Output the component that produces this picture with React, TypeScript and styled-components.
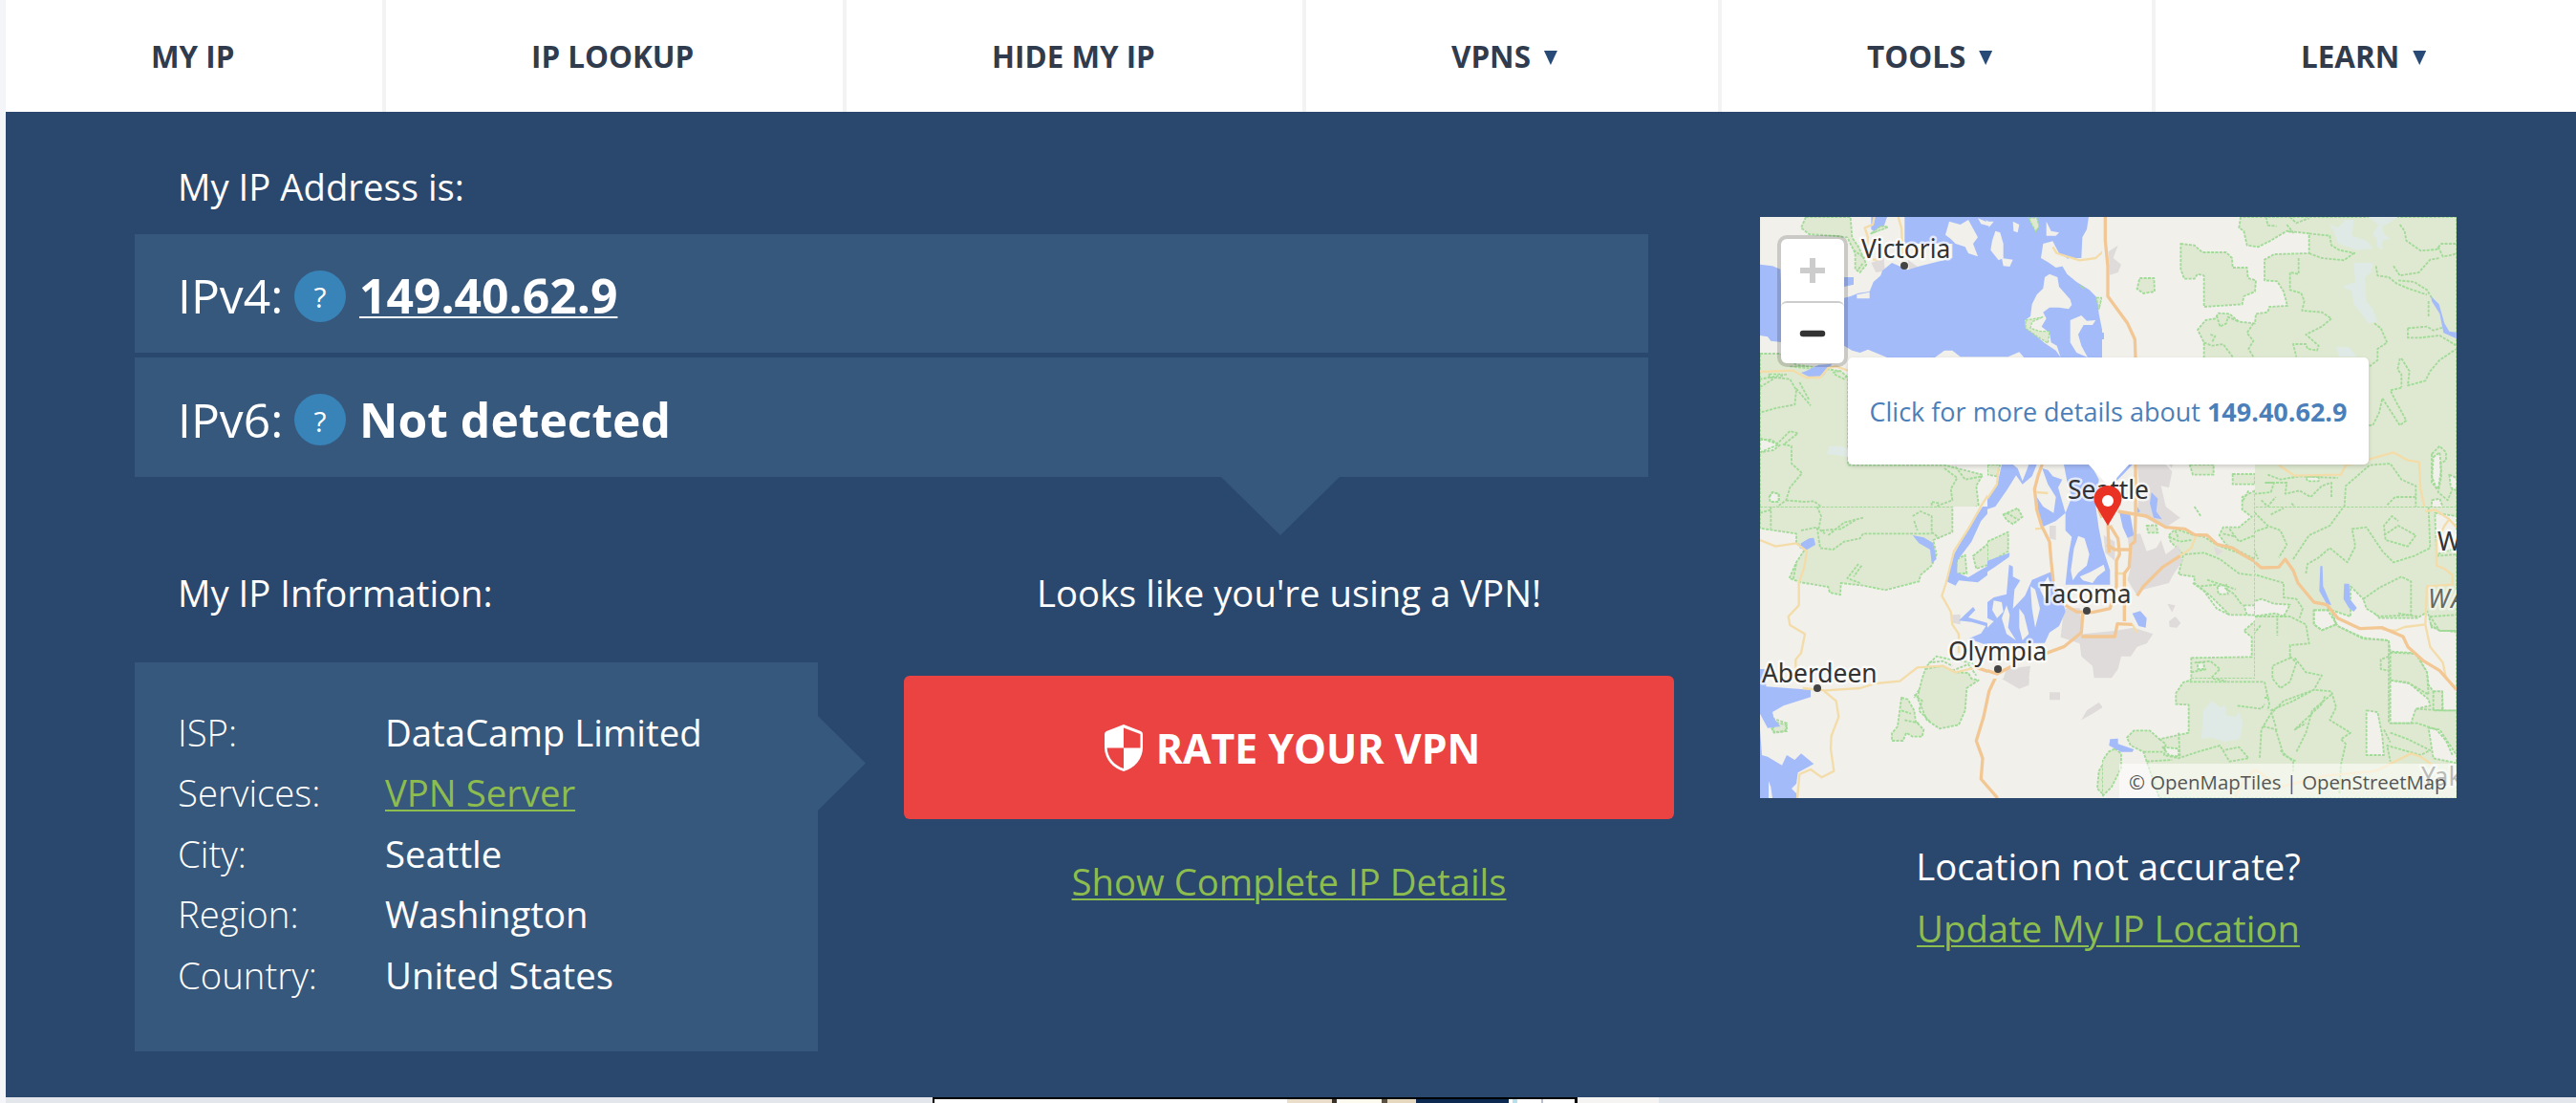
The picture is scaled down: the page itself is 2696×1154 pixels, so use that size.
import React from 'react';
import styled, { createGlobalStyle, css } from 'styled-components';

const NAVY = '#2a476e';
const PANEL = '#37587d';
const GREEN = '#8dbd4e';
const LAND = '#f1f0eb';
const WOOD = '#dfe9d1';
const WATER = '#a4bbfa';
const TOWN = '#dedbda';
const ICE = '#dfeae6';

const Global = createGlobalStyle`
  * { box-sizing: border-box; }
  body { margin: 0; background: #f3f5f8; overflow: hidden; font-family: "Open Sans", "Noto Sans", sans-serif; }
`;

const Page = styled.div`
  display: flex;
  flex-direction: column;
  width: 2696px;
  height: 1154px;
  padding-left: 6px;
  overflow: hidden;
`;

const Nav = styled.nav`
  display: grid;
  grid-template-columns: 398px 482px 481px 435px 454px 1fr;
  height: 117px;
  flex: none;
  background: #fff;
`;

const NavItem = styled.a`
  display: flex;
  align-items: center;
  gap: 14px;
  padding: 0 0 1px 152px;
  border-right: 4px solid #f3f3f4;
  color: #303c4d;
  font-size: 31.4px;
  font-weight: 700;
  white-space: nowrap;
  &:last-child { border-right: 0; }
`;

const Caret = styled.span`
  width: 14px;
  height: 15px;
  margin-top: 5px;
  background: #284a77;
  clip-path: polygon(0 0, 100% 0, 50% 100%);
`;

const Hero = styled.main`
  display: flex;
  height: 1031px;
  flex: none;
  padding: 51px 0 0 135px;
  background: ${NAVY};
  color: #fff;
  font-size: 38.3px;
  line-height: 52px;
`;

const Left = styled.section`
  width: 1701px;
  flex: none;
`;

const Title = styled.h2<{ $indent?: boolean }>`
  margin: 0;
  padding-top: 1px;
  height: 52px;
  padding-left: ${(p) => (p.$indent ? 45 : 0)}px;
  font-size: inherit;
  font-weight: 400;
  white-space: nowrap;
`;

const Addresses = styled.div`
  position: relative;
  display: flex;
  flex-direction: column;
  gap: 5px;
  width: 1584px;
  margin-top: 25px;
  &::after {
    content: '';
    position: absolute;
    left: 1137px;
    top: 100%;
    width: 124px;
    height: 61px;
    background: ${PANEL};
    clip-path: polygon(0 0, 100% 0, 50% 100%);
  }
`;

const AddressRow = styled.div<{ $h: number }>`
  display: flex;
  align-items: center;
  height: ${(p) => p.$h}px;
  padding: 5px 0 0 45px;
  background: ${PANEL};
  font-size: 49.8px;
`;

const Kind = styled.span`
  width: 122px;
  margin-top: -1px;
`;

const Help = styled.span`
  display: flex;
  align-items: center;
  justify-content: center;
  width: 54px;
  height: 54px;
  margin-right: 14px;
  border-radius: 50%;
  background: #3884b8;
  font-size: 30px;
  padding-top: 3px;
`;

const Address = styled.strong<{ $link?: boolean }>`
  margin-top: -1px;
  font-weight: 700;
  text-decoration: ${(p) => (p.$link ? 'underline' : 'none')};
  text-decoration-thickness: 2px;
  text-underline-offset: 3px;
`;

const Columns = styled.div`
  display: flex;
  gap: 90px;
  padding-top: 94px;
`;

const InfoColumn = styled.div`
  width: 715px;
`;

const InfoPanel = styled.dl`
  position: relative;
  display: grid;
  grid-template-columns: 217px 1fr;
  grid-auto-rows: 63.4px;
  height: 407px;
  margin: 48px 0 0;
  padding: 42px 0 0 45px;
  background: ${PANEL};
  line-height: 63.4px;
  white-space: nowrap;
  &::after {
    content: '';
    position: absolute;
    left: 100%;
    top: 56px;
    width: 50px;
    height: 99px;
    background: ${PANEL};
    clip-path: polygon(0 0, 100% 50%, 0 100%);
  }
`;

const Term = styled.dt`
  font-weight: 300;
`;

const Value = styled.dd`
  margin: 0;
`;

const Link = styled.a`
  color: ${GREEN};
  text-decoration: underline;
  text-decoration-thickness: 2px;
  text-underline-offset: 3px;
`;

const ActionColumn = styled.div`
  display: flex;
  flex-direction: column;
  align-items: center;
  width: 806px;
`;

const RateButton = styled.button`
  display: flex;
  align-items: center;
  justify-content: center;
  gap: 14px;
  width: 100%;
  height: 150px;
  margin: 62px 0 39px;
  padding: 0 0 0 7px;
  border: 0;
  border-radius: 6px;
  background: #eb4242;
  color: #fff;
  font: 700 42.8px "Open Sans", sans-serif;
`;

const Right = styled.section`
  display: flex;
  flex-direction: column;
  align-items: center;
  width: 729px;
  padding-top: 59px;
  line-height: 65px;
`;

const MapBox = styled.div`
  position: relative;
  width: 729px;
  height: 608px;
  margin-bottom: 39px;
  overflow: hidden;
  background: ${LAND};
`;

const ZoomBar = styled.div`
  position: absolute;
  left: 18px;
  top: 19px;
  width: 74px;
  height: 138px;
  border: 4px solid rgba(0, 0, 0, 0.16);
  border-radius: 10px;
  background: #fff;
  background-clip: padding-box;
`;

const ZoomButton = styled.div<{ $color: string }>`
  display: flex;
  align-items: center;
  justify-content: center;
  height: 65px;
  color: ${(p) => p.$color};
  & + & { border-top: 2px solid #ccc; border-radius: 6px 6px 0 0; }
`;

const Popup = styled.div`
  position: absolute;
  left: 92px;
  top: 147px;
  display: flex;
  align-items: center;
  justify-content: center;
  width: 545px;
  height: 112px;
  padding-top: 2px;
  border-radius: 5px;
  background: #fff;
  box-shadow: 0 2px 4px rgba(0, 0, 0, 0.16);
  color: #4b7fb9;
  font-size: 27px;
  line-height: 40px;
  white-space: pre;
  &::after {
    content: '';
    position: absolute;
    left: 251px;
    top: 111px;
    width: 44px;
    height: 24px;
    background: #fff;
    clip-path: polygon(0 0, 100% 0, 50% 100%);
  }
`;

const Credits = styled.div`
  position: absolute;
  right: 0;
  bottom: 0;
  display: flex;
  align-items: center;
  width: 353px;
  height: 36px;
  padding: 3px 0 0 10px;
  background: rgba(255, 255, 255, 0.55);
  color: #555;
  font-size: 20.4px;
  line-height: 33px;
  white-space: pre;
`;

const Pin = styled.svg`
  position: absolute;
  left: 349px;
  top: 280px;
`;

const Footer = styled.div`
  display: flex;
  height: 6px;
  flex: none;
  background: #e3e7ec;
`;

const Strip = styled.span<{ $w: number; $c?: string }>`
  flex: none;
  width: ${(p) => p.$w}px;
  background: ${(p) => p.$c || 'transparent'};
`;

const Banner = styled.div`
  display: flex;
  width: 675px;
  flex: none;
  border: solid #000;
  border-width: 2px 3px 0 2px;
  background: #fff;
`;

type Tile = {
  x: number; y: number; w: number; h: number;
  wood?: string; clearing?: string; grove?: string; ice?: string; town?: string;
  water?: string; island?: string; trail?: string; minor?: string; major?: string;
};

const tiles: Tile[] = [
  {
    x: -12, y: -12, w: 380, h: 320,
    wood: 'M180,36 L320,36 L325,100 L345,130 L370,185 L350,210 L335,200 L335,150 L310,100 L265,95 L190,90 L165,70Z M36,465 L100,465 L150,500 L235,512 L290,520 L312,540 V815 H615 L735,845 L715,880 L722,940 L700,960 H36Z',
    clearing: 'M36,735 L70,735 L98,752 L78,768 L36,775Z M65,530 H105 V540 H65Z M65,915 L75,900 L95,905 V930 H68Z',
    ice: 'M255,755 L290,755 L312,765 V788 L245,780Z',
    town: 'M385,180 L425,165 L428,205 L400,210Z M500,170 L535,195 V203 L505,203Z',
    water: 'M36,185 L75,190 L100,200 L110,430 L70,425 L60,412 L36,408Z M180,520 L220,500 L262,497 L235,535 L190,538 L165,525Z M385,36 H435 L425,65 L400,85 L385,75Z M300,225 H330 V248 L300,255Z M490,36 H1068 L1062,75 L1048,100 L1045,165 L1005,165 L985,190 L1000,215 L1030,240 L1070,265 L1095,290 L1100,340 L1112,400 V477 H865 L850,460 L815,475 H665 L640,455 L615,455 L585,477 H435 L375,452 L350,462 L325,455 L300,440 V290 L320,285 L345,275 L380,270 L392,240 L415,220 L420,205 L450,180 L500,202 L540,190 L640,165 L640,120 H490Z',
    island: 'M630,50 L665,60 L690,45 L720,100 L705,120 L720,160 L690,150 L680,130 L650,120 L635,105 L618,92Z M765,110 L775,80 L790,85 L800,120 V165 L785,172 L760,140Z M830,50 L850,60 L845,85 L832,80Z M720,40 L745,50 L770,50 L758,65 L730,58Z M795,165 L830,170 L820,192 L800,190Z M935,50 L950,80 L975,85 L965,95 L935,95Z M925,120 L955,112 L975,150 L1000,165 L1010,178 L990,190 L965,195 L940,178 L918,165Z M930,225 L945,215 L970,225 L975,255 L1010,295 L1015,312 L1005,325 L975,320 L945,320 L925,335 L935,355 L920,380 L945,400 L950,430 L968,440 L980,477 L965,455 L930,432 L895,402 L870,385 L868,360 L885,348 L890,310 L905,280 L925,260Z M1010,360 L1045,345 L1062,362 L1090,360 L1080,375 L1052,375 L1035,405 L1045,440 L1065,477 L1030,462 L1010,430Z M340,280 L380,272 V292 H340Z M745,45 L760,55 L755,70 Z',
    grove: 'M880,40 L905,38 L912,65 L902,82 L890,60Z M870,360 L925,350 L890,365 L885,385 L915,395 L945,395 L940,432 L905,410 L870,385Z M1040,250 L1055,262 Z M1092,290 L1108,290 L1100,325Z M415,65 L438,68 L405,80 L385,88Z',
    trail: 'M36,570 L85,540 L130,545 L150,580 L145,625 L90,635 L36,650 M150,575 L195,628 M160,555 L190,610 M120,530 L36,545 M36,730 L90,748 L130,708 L155,715 L110,750 L135,755 L135,810 L168,840 L130,885 L118,925 L70,960 M36,775 L95,750 M118,925 L175,930 L205,928 L235,950 M65,915 L75,900 L95,905 V930 M615,825 L655,855 L635,890 L640,925 L600,940 L560,960 M650,820 L680,860 L735,850 M575,955 V930 L600,935 M130,505 L225,515 L225,508 M270,530 L300,545 L312,530 M265,525 L290,518 M330,140 L365,165 M345,200 L360,180',
    minor: 'M36,522 L140,518 L180,540 L225,540 L250,510 L275,505 L312,518 M395,36 L390,60 L365,70 L375,100 L372,130 M470,36 L480,70 L485,170 M390,170 L410,170 M955,130 L968,150 L1000,160 L1040,172 L1090,165 L1118,140 M790,815 L785,860 L725,950',
    major: 'M1120,36 L1118,130 L1125,170 L1130,290 L1142,310',
  },
  {
    x: 358, y: -12, w: 380, h: 320,
    wood: 'M435,36 L430,70 L445,80 L455,125 L490,130 L530,110 L580,80 L650,88 V150 L540,153 L510,170 V235 L550,238 L570,270 L582,315 L525,318 L520,335 L483,340 L480,370 L430,365 L400,340 L365,338 L355,355 L325,360 L300,390 L320,430 V480 H475 V905 L437,912 V960 H1113 V36Z M247,120 L290,125 L315,147 L390,147 L408,165 L410,195 L455,195 L458,228 L483,235 L480,270 L445,285 L440,310 L320,318 V220 L300,215 L290,230 L258,230 L247,200Z M118,228 H163 L165,270 L130,276 L110,262Z M280,815 L295,847 L350,845 V815Z M408,845 H473 V877 L410,873Z',
    clearing: 'M1040,790 L1060,775 L1065,830 L1055,890 L1035,870Z M1090,845 L1113,855 V895 L1095,885Z M1035,925 L1060,920 L1075,960 H1035Z M640,852 L680,850 V865 H645Z',
    ice: 'M715,60 L740,70 L765,45 L790,45 L785,95 L830,110 L850,135 L800,140 L740,118 L730,85Z M790,180 H850 L845,210 L825,225 L830,300 L850,325 L865,365 L835,370 L815,340 L790,310 L785,270 L755,255 L795,240Z M735,445 H775 L800,475 H745Z M835,36 H930 L900,55 L880,65 L885,90 L905,105 L880,110 L880,138 L865,130 L862,105 L850,90 L868,60Z',
    town: 'M20,145 L50,125 L35,165 L60,185 L50,210 L25,218Z',
    water: 'M1033,285 L1058,310 L1075,370 L1090,395 L1113,398 V418 L1072,400 L1060,340 L1035,300Z M0,398 L6,400 V420 H0Z',
    trail: 'M515,36 L520,62 L548,65 M590,36 L610,55 L650,40 M580,60 L600,85 L580,80 M650,150 L690,165 L760,172 L790,150 M650,88 L715,95 L720,125 L745,140 L795,150 M617,165 V215 L590,210 V265 L625,275 L635,300 L628,330 L690,335 L720,355 L690,380 L640,405 L680,440 L675,455 L645,450 L640,435 L600,435 L610,475 M320,430 L345,440 L380,435 L410,475 M340,405 L355,410 L345,430 M360,345 L370,380 L390,370 L395,350 L430,365 M475,370 L455,400 L475,425 L460,450 L475,475 M855,370 L875,385 L895,430 L865,450 L865,485 L840,505 M935,60 L950,80 L955,110 L1000,142 L1050,138 L1065,120 L1113,120 M1055,130 L1070,160 L1100,155 L1113,150 M915,190 L935,220 L995,210 L1030,170 L1060,165 M930,235 L980,240 L1020,265 L1035,290 M860,190 L865,220 L900,225 L925,245 L960,260 L1020,280 M1025,300 L1025,350 M960,385 V415 H1000 L1060,408 L1113,440 M960,385 L1020,380 L1040,392 L1080,380 M935,480 L928,515 L940,530 V570 M940,480 L965,520 L960,565 L1015,550 L1030,520 L1060,485 L1113,450 M940,572 L905,580 L920,610 L955,675 L935,690 L880,605 L870,650 L850,690 L837,690 M1035,780 L1060,755 L1080,775 L1080,800 L1062,810 L1065,850 L1055,900 L1085,925 L1100,890 M1035,780 L1035,850 L1050,890 M760,960 L765,880 L800,850 L840,815 L905,810 L940,860 L985,880 L985,950 M985,915 L920,915 L895,940 M520,870 L580,870 L575,905 L620,895 L655,915 L690,880 L720,870 V915 M440,915 L480,905 L530,900 L540,870 L510,870 M500,925 L520,945 L545,915 M595,935 L605,945 M520,845 L560,860 L620,850 L740,855',
    minor: 'M837,797 L880,785 L915,775 L960,800 L995,805 L1000,890 L1015,960 M555,815 L605,848 L750,845 L765,815 L837,800',
    major: 'M10,36 V110 L18,190 V285 L80,370 L103,420 L105,477',
  },
  {
    x: -12, y: 303, w: 380, h: 320,
    wood: 'M36,0 H640 V80 L580,105 L590,150 L575,185 L540,215 L535,235 L430,262 L360,248 L290,240 L288,277 L255,270 L250,252 L165,238 L128,225 L150,175 L180,130 L150,115 V85 L36,68Z M655,165 L680,152 L685,210 H650Z M705,155 L760,110 L818,80 V130 L760,180 L715,195Z M555,510 L610,500 L650,520 L690,522 L700,540 L722,545 L685,570 L680,640 L660,685 L600,697 L560,670 L530,600 L545,540Z M480,600 L500,605 L520,640 L525,675 L550,700 L545,722 L515,722 L495,710 L485,735 H450 V712 L468,690Z M1140,740 L1130,780 L1100,830 L1095,885 L1115,905 L1140,860Z M75,675 L120,685 V705 L80,708Z',
    clearing: '',
    town: 'M785,535 L885,500 L880,560 L850,572Z M945,583 H978 V607 H945Z M1045,670 L1062,640 L1100,615 L1112,630 L1080,650Z M1042,405 H1140 V530 L1085,535 L1080,510 L1042,470Z M640,340 L665,338 V370 L640,365Z',
    water: 'M515,90 L550,97 L580,115 L590,165 L575,178 L570,135 L535,115Z M165,115 L190,100 L205,98 L210,120 L180,137 L160,130Z M735,0 L690,70 L645,150 L622,235 L650,248 L660,232 L720,238 L760,208 L800,185 L820,150 L780,172 L735,195 L690,222 L655,208 V170 L700,110 L730,45 L770,0Z M660,358 L705,315 L712,325 L690,348 L765,370 V440 L690,415 L730,398 L745,375 L700,362Z M36,510 H55 V565 L195,575 V598 L110,625 L75,645 L80,665 L100,690 L60,695 L36,650Z M36,700 L42,780 L60,785 L105,812 L120,780 L145,795 L165,775 L205,808 L155,835 L150,870 L135,885 L150,900 V915 H36Z',
    island: 'M63,862 L70,880 L75,915 H63Z',
    trail: 'M70,0 V68 M36,20 L70,10 M215,0 L228,30 L220,70 L240,85 M165,75 L215,65 L225,130 L265,135 L300,110 L350,100 L360,85 H575 M250,90 L300,50 L360,35 M230,75 L290,70 L340,40 M515,30 L540,15 L575,30 V80 L600,100 M520,45 L530,75 M345,180 L310,225 L350,240 M355,185 L330,220 M150,180 L140,230 M560,500 L590,470 L625,478 L700,490 L720,505 M565,490 L610,485 L640,500 M640,515 L690,495 L715,530 M520,590 L545,610 L535,640 L570,675 M480,640 L510,650 M490,670 L535,680 M75,665 L120,680 L115,705 L80,710 L70,690 M1120,830 L1110,860 M535,575 L520,600',
    minor: 'M36,105 L85,125 L150,115 L183,140 L175,190 L158,240 V310 L125,345 L130,372 L177,400 L165,460 L148,480 V520 M730,0 L690,70 L645,140 L620,240 L607,280 L635,330 L640,370 L660,400 V460 M170,570 L240,577 L350,570 L400,555 L475,548 L530,505 L610,500 L650,520 L715,505 M235,577 L275,610 L283,660 L260,720 L258,760 L268,830 L230,850 L195,825 L160,840 L153,915',
    major: 'M715,505 L780,527 L755,580 L738,660 L715,735 L735,790 L730,855 L782,915 M780,527 L840,500',
  },
  {
    x: 358, y: 303, w: 380, h: 320,
    wood: 'M430,0 H1113 V915 H180 L140,800 L130,770 L90,750 L78,725 L100,703 H150 L180,730 L272,710 V622 L232,620 V585 L255,552 L278,545 V490 L290,472 H470 V380 L450,370 L470,250 L430,150Z M40,760 L60,775 V820 L30,880 L0,910 V800 L20,770Z',
    clearing: 'M450,318 L470,300 L500,290 L540,305 L590,308 L570,345 L545,335 L470,345Z M665,325 H720 L735,370 L690,388 L665,370Z M780,250 L820,290 L870,350 L990,350 L1022,330 L1035,380 L1113,395 V640 L1070,640 L1068,580 L1040,580 L1025,560 L1020,520 L985,460 L905,455 L900,420 L820,415 L740,375 L705,320 L780,345Z M905,545 L965,555 L1025,605 L1030,625 L985,635 L970,680 H905Z M830,640 L865,645 L880,720 L885,780 H830Z M1025,695 L1060,700 L1113,780 V805 L1040,790Z M1045,20 L1113,30 V130 L1050,150Z M190,755 L240,760 V785 L210,780Z',
    grove: 'M820,290 L870,255 L940,220 L970,235 V340 L870,345 L830,320Z M1030,345 L1113,340 V390 H1060Z M905,458 L985,462 L1020,520 L1025,590 L960,552 L905,545Z M1040,580 H1068 V640 H1040Z',
    ice: 'M345,610 L370,630 L388,625 L390,655 L420,660 L430,645 L442,680 L432,730 L385,738 L345,725 L312,728 L318,640Z',
    water: 'M25,730 L50,728 L50,745 L100,762 L95,770 L60,770 L22,750Z M685,187 H692 L694,250 L720,310 L705,305 L682,265Z M760,242 H776 L778,290 L800,318 L790,330 L775,318 L758,290Z',
    trail: 'M440,15 L480,20 L520,60 L560,75 L580,120 L555,160 M520,65 L475,80 V130 L490,165 M530,25 L570,5 M640,210 L645,180 L680,160 L715,130 L770,175 L795,125 L785,70 L830,65 L880,140 L915,175 L980,155 L1030,130 L1025,0 M600,165 L650,90 L715,60 L755,5 M885,90 L930,60 L985,90 L960,125 L890,105 L885,60 L910,30 L930,45 M450,200 L485,215 L570,240 V285 L610,290 L630,320 L620,350 M480,345 H590 L640,370 L650,430 L590,435 V475 L535,500 V540 L560,570 L590,550 L610,490 L590,470 M605,475 L640,520 L690,530 L665,575 L570,610 L530,650 L500,700 L495,790 M510,550 L525,620 L520,640 M510,600 L525,600 M425,625 L500,635 L510,620 M275,550 H505 M545,690 L530,640 L600,610 L665,575 L720,580 L735,630 L715,670 L780,710 L750,730 L765,745 L750,810 L745,900 M720,590 L660,640 L640,710 L610,770 M700,595 L690,620 L605,700 L640,680 M545,700 L570,780 L610,800 M470,370 L450,390 L480,395 L500,370 M550,350 V405 M740,375 L820,412 L900,420 V680 M900,470 L875,480 V510 L900,515 M985,635 L1070,640 H1113 M905,680 H990 L1050,700 L1080,735 L1100,780 M905,710 L960,730 L1030,765 L1000,780 L895,750 L905,800 M885,700 L905,740 M930,335 L990,345 M350,480 L375,500 L350,540 L390,548 M290,480 V540 M325,485 L340,540 M180,730 L200,745 L195,780 L240,790 L300,770 L370,750 L400,800 L460,790 L430,755 L380,765 M240,710 L245,790 M130,770 L190,770 M140,800 L220,795 M505,690 L550,700 M560,765 L600,800 V830 M1050,155 L1113,150 M1030,370 L1060,390 H1113 M665,325 H720 L735,370 L690,388 L665,370Z',
    minor: 'M880,385 L920,390 L950,378 L1015,370 L1020,250 L1100,245 V215 L1075,195 L1050,185 V110 L1075,60 L1090,40 L1045,10 L1015,15 M1090,40 L1113,65 M1015,370 L1030,440 L1070,490 L1080,540 M480,825 L560,880 L700,845 L860,830 L970,775 L1000,785 L1035,810 M480,825 L440,870 L415,915',
    major: 'M480,175 L500,192 L555,190 L575,165 L600,200 L615,240 L665,300 L705,308 L740,350 L810,383 L880,380 L945,408 L960,440 L1010,485 L1060,515 L1113,575',
  },
  {
    x: 238, y: 243, w: 280, h: 240,
    wood: 'M0,48 H40 L30,85 L0,80Z M50,205 L95,185 L110,212 L80,235 L60,222Z M0,290 L65,260 V320 L0,360Z M635,48 L645,80 H710 V48Z M770,78 H840 V110 H770Z M840,130 L800,150 V190 L830,212 L790,245 L740,245 L728,270 L750,300 L840,345Z M570,270 L590,250 L650,270 L680,275 L720,300 L800,330 L840,355 V520 L760,520 L700,460 L650,420 V400 L600,393 L615,330 L575,290Z M640,655 L830,652 V590 L805,570 L840,540 V720 H640Z M500,240 L530,238 L535,262 L505,262Z',
    clearing: 'M722,430 L750,425 L755,455 L725,455Z M805,490 H840 V520 H815Z M660,670 L680,670 V690 H660Z',
    town: 'M470,48 H560 L580,70 L570,120 L545,115 L560,180 L605,215 L560,245 L530,235 L470,200 L478,120Z M440,270 L480,265 L500,320 L530,310 L545,285 L560,330 L600,300 L612,350 L580,400 L570,420 L490,440 L470,460 L440,410 L450,370Z M240,500 L290,498 L300,580 L400,570 L460,560 L520,580 L500,610 L470,620 L450,650 L420,650 L410,690 L390,718 H335 L330,680 L295,650 L290,610 L230,590Z M195,240 H215 V285 L195,280Z M365,270 L400,290 V350 L370,325Z M565,485 L590,490 L580,512Z M570,540 L590,525 L607,545 L595,560 L572,558Z M60,690 L135,680 L130,720 H50Z M710,305 L740,320 L720,335Z M570,48 L582,48 L578,60Z M385,140 L410,130 V190 L385,200Z',
    water: 'M45,48 H155 L140,85 L110,110 L90,82 L60,130 L25,180 L0,188 V155 L30,115Z M240,48 H325 L350,95 L340,180 L350,250 L362,310 L385,380 V425 H245 L255,330 L265,275 L245,255 V200 L265,150 L250,100Z M172,60 L190,65 L205,85 L235,95 L222,120 L235,165 L245,200 L215,225 L175,243 L160,205 L155,150 L175,180 L208,200 L215,150 L190,110Z M68,362 L80,368 V400 L103,412 L85,440 L80,500 L118,460 L140,410 L200,385 L215,430 L240,490 L245,510 L225,555 L195,575 L180,608 L0,610 V560 L20,540 L0,530 V480 L20,465 L60,455Z M0,350 L70,325 L68,338 L20,372 L0,385Z M415,200 L448,203 L460,270 L440,278 L425,245Z M405,100 L430,75 L455,48 H410Z M515,135 L535,155 L530,195 L548,220 L522,215 L510,170Z M455,515 L480,508 L500,530 L497,560 L475,555Z M470,180 L480,195 L470,200Z',
    island: 'M285,272 L305,280 L320,330 L312,365 L285,388 L268,412 L262,380 L272,310Z M365,362 L370,380 L345,400 L330,420 L300,412 L290,400 L325,385Z M20,475 L45,480 L50,510 L30,530 L15,505Z M60,490 L70,520 L65,560 L90,600 L60,580 L45,530Z M100,500 L115,520 L130,580 L110,600 L100,560Z M135,430 L150,440 L165,500 L150,560 L140,500Z M190,400 L200,430 L180,470 L165,440Z M80,48 L95,60 L110,100 L120,75 L130,48Z',
    trail: 'M650,180 L670,210 M60,200 L95,220 M570,275 L605,290 L640,285 M620,330 L680,325 L730,345 L790,390 L830,395 M645,420 L680,445 L720,500 L760,520 M670,430 L720,425 M690,410 L780,440 M760,250 L790,290 L840,270 M740,265 L780,275 M745,435 L775,455 L800,490 M650,670 L700,665 L730,690 L700,720 M640,700 L690,690 M820,130 L800,165 M590,255 L600,280',
    minor: 'M35,60 L30,110 L0,155 M155,135 L190,138 M150,250 L175,248 M400,390 H430 M455,550 L470,575 M605,335 L640,310 L655,272',
    major: 'M172,48 L160,80 L148,125 L155,190 L170,240 L195,290 L200,350 L207,415 M465,48 V205 L463,290 L450,300 L445,370 L430,390 V540 M350,190 L360,215 M410,195 L500,210 L560,245 L620,250 L650,268 L690,270 L720,298 L770,310 L800,330 L840,352 M378,235 L382,325 M385,240 L410,280 L415,330 L405,350 V430 L385,500 L330,512 L280,510 L245,490 M375,300 L400,315 H450 M300,510 L295,575 L240,620 L185,640 M75,682 L30,705 L0,695 M295,588 H400 L408,548 L455,550 M470,460 L490,430 L550,370 L605,335',
  },
];

const places: [string, number, number, number, number][] = [
  ['Victoria', 106, 43, 151, 51],
  ['Seattle', 322, 295, 0, 0],
  ['Tacoma', 293, 404, 342, 412],
  ['Olympia', 197, 464, 249, 473],
  ['Aberdeen', 2, 487, 60, 493],
];

const Label = styled.text<{ $faint?: boolean; $italic?: boolean }>`
  font-family: "Noto Sans", "Open Sans", sans-serif;
  font-size: 26.4px;
  fill: #333;
  stroke: rgba(255, 255, 255, 0.7);
  stroke-width: 5px;
  stroke-linejoin: round;
  paint-order: stroke;
  ${(p) => p.$faint && css`opacity: 0.7;`}
  ${(p) => p.$italic && css`font-style: italic; letter-spacing: 2px;`}
`;

const Terrain = () => (
  <svg width="729" height="608" viewBox="0 0 729 608">
    {tiles.map((t, i) => (
      <svg key={i} x={t.x} y={t.y} width={t.w} height={t.h} viewBox={`0 0 ${t.w * 3} ${t.h * 3}`}>
        <rect width="100%" height="100%" fill={LAND} />
        <g stroke="#a2da99" strokeWidth="5.5" strokeDasharray="9 4" strokeLinejoin="round">
          <path d={t.wood} fill={WOOD} />
          <path d={t.clearing} fill={LAND} />
          <path d={t.grove} fill={WOOD} />
          <path d={t.trail} fill="none" />
        </g>
        <path d={t.ice} fill={ICE} />
        <path d={t.town} fill={TOWN} />
        <path d={t.water} fill={WATER} />
        <path d={t.island} fill={LAND} />
        {t.x < 0 && <path d={t.grove} fill={WOOD} stroke="#a2da99" strokeWidth="4" strokeDasharray="8 4" />}
        <path d={t.minor} fill="none" stroke="#f4dca9" strokeWidth="7" strokeLinejoin="round" />
        <path d={t.major} fill="none" stroke="#f2c793" strokeWidth="10" strokeLinejoin="round" />
      </svg>
    ))}
    {places.map(([name, x, y, dx, dy]) => (
      <g key={name}>
        {dx > 0 && <circle cx={dx} cy={dy} r="4" fill="#444" />}
        <Label x={x} y={y}>{name}</Label>
      </g>
    ))}
    <Label x="709" y="349">W</Label>
    <Label x="699" y="409" $faint $italic>WA</Label>
    <Label x="692" y="595" $faint>Yak</Label>
  </svg>
);

const Shield = () => (
  <svg width="40" height="49" viewBox="0 0 40 49">
    <path d="M20 0 L38 7 Q40 8 40 10 V24 C40 36 31 46 20 49 C9 46 0 36 0 24 V10 Q0 8 2 7Z" fill="#fff" />
    <path d="M20 3.5 L37.4 10 V24.5 H20Z M20 24.5 H2.6 C3.2 35 10.5 43 20 46Z" fill="#eb4242" />
  </svg>
);

const menu: [string, boolean][] = [
  ['MY IP', false], ['IP LOOKUP', false], ['HIDE MY IP', false],
  ['VPNS', true], ['TOOLS', true], ['LEARN', true],
];

const info: [string, string, boolean][] = [
  ['ISP:', 'DataCamp Limited', false],
  ['Services:', 'VPN Server', true],
  ['City:', 'Seattle', false],
  ['Region:', 'Washington', false],
  ['Country:', 'United States', false],
];

const banner: [number, string][] = [
  [369, '#fff'], [47, '#eaddc9'], [5, '#3c3328'], [3, '#fff'], [44, '#fcf9ee'], [6, '#5c5244'],
  [30, '#e5d8bf'], [97, '#0c2a51'], [4, '#fff'], [5, '#b5e0ec'], [25, '#fff'], [2, '#b8bdd0'],
];

export default function App() {
  return (
    <Page>
      <Global />
      <Nav>
        {menu.map(([name, sub]) => (
          <NavItem key={name}>{name}{sub && <Caret />}</NavItem>
        ))}
      </Nav>
      <Hero>
        <Left>
          <Title $indent>My IP Address is:</Title>
          <Addresses>
            <AddressRow $h={124}>
              <Kind>IPv4:</Kind><Help>?</Help><Address $link>149.40.62.9</Address>
            </AddressRow>
            <AddressRow $h={125}>
              <Kind>IPv6:</Kind><Help>?</Help><Address>Not detected</Address>
            </AddressRow>
          </Addresses>
          <Columns>
            <InfoColumn>
              <Title $indent>My IP Information:</Title>
              <InfoPanel>
                {info.map(([k, v, link]) => (
                  <React.Fragment key={k}>
                    <Term>{k}</Term>
                    <Value>{link ? <Link>{v}</Link> : v}</Value>
                  </React.Fragment>
                ))}
              </InfoPanel>
            </InfoColumn>
            <ActionColumn>
              <Title>Looks like you're using a VPN!</Title>
              <RateButton><Shield />RATE YOUR VPN</RateButton>
              <Link>Show Complete IP Details</Link>
            </ActionColumn>
          </Columns>
        </Left>
        <Right>
          <MapBox>
            <Terrain />
            <ZoomBar>
              <ZoomButton $color="#ccc">
                <svg width="28" height="28"><path d="M1 14 H27 M14 1 V27" stroke="currentColor" strokeWidth="6" /></svg>
              </ZoomButton>
              <ZoomButton $color="#333">
                <svg width="28" height="8"><path d="M4 4 H24" stroke="currentColor" strokeWidth="6.5" strokeLinecap="round" /></svg>
              </ZoomButton>
            </ZoomBar>
            <Popup>Click for more details about <b>149.40.62.9</b></Popup>
            <Pin width="30" height="43" viewBox="0 0 30 43">
              <path d="M15 43 L3 23 C-4 11 5 1 15 1 C25 1 34 11 27 23Z" fill="#e93223" />
              <circle cx="15" cy="17" r="6" fill="#fff" />
            </Pin>
            <Credits>© OpenMapTiles | OpenStreetMap</Credits>
          </MapBox>
          <span>Location not accurate?</span>
          <Link>Update My IP Location</Link>
        </Right>
      </Hero>
      <Footer>
        <Strip $w={970} />
        <Banner>
          {banner.map(([w, c], i) => <Strip key={i} $w={w} $c={c} />)}
        </Banner>
        <Strip $w={85} $c="#f5f4f2" />
      </Footer>
    </Page>
  );
}
